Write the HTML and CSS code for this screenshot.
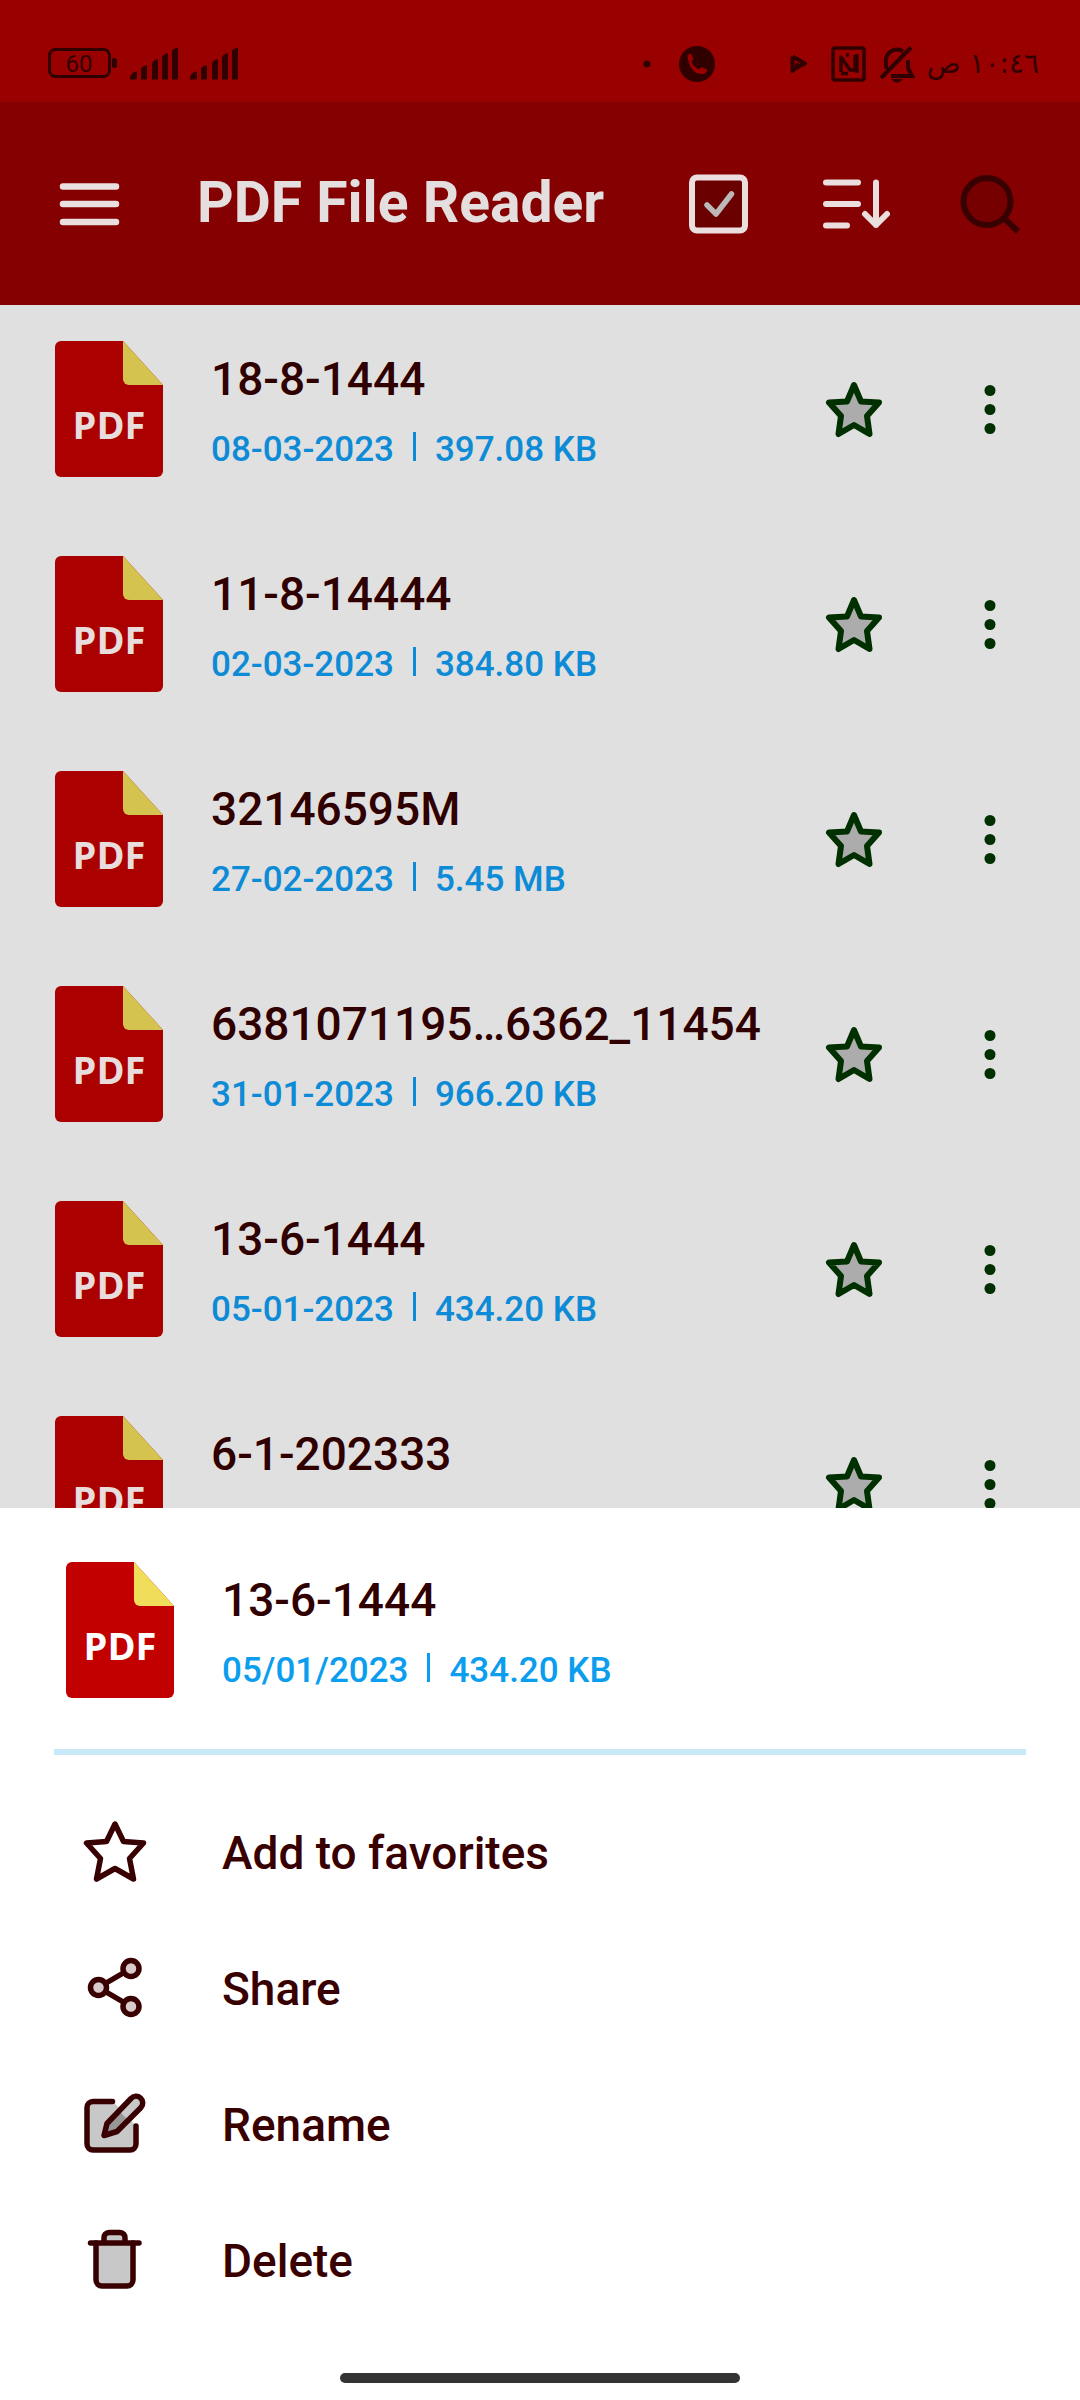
FILE: index.html
```html
<!DOCTYPE html>
<html lang="en">
<head>
<meta charset="utf-8">
<meta name="viewport" content="width=device-width, initial-scale=1">
<title>PDF File Reader</title>
<link rel="stylesheet" href="styles.css">
</head>
<body>
<svg class="sprite" aria-hidden="true">
  <symbol id="doc" viewBox="0 0 108 136">
    <path class="doc-page" d="M6 0H68L108 44V130a6 6 0 0 1-6 6H6a6 6 0 0 1-6-6V6a6 6 0 0 1 6-6Z"/>
    <path class="doc-fold" d="M68 0L108 44H74a6 6 0 0 1-6-6Z"/>
  </symbol>
  <symbol id="star" viewBox="0 0 72 72">
    <path d="M36 12L43 28.500L61 29.500L49 43L51.500 61L36 52L20.500 61L23 43L11 29.500L29 28.500Z" fill="#acacac" stroke="#003000" stroke-width="6" stroke-linejoin="round"/>
  </symbol>
  <symbol id="dots" viewBox="0 0 72 72">
    <g fill="#003000"><circle cx="36" cy="17.500" r="5.500"/><circle cx="36" cy="36.500" r="5.500"/><circle cx="36" cy="55.500" r="5.500"/></g>
  </symbol>
  <symbol id="signal" viewBox="0 0 48 32">
    <path d="M0 31.500a7 7 0 0 1 7-8v8ZM11 31.500V21q1-3 6-4v14.500ZM22 31.500V15q1-3 6-4v20.500ZM32 31.500V9q1-3 6-4v26.500ZM42 31.500V3q1-3 6-3v31.500Z" fill="#300000"/>
  </symbol>
</svg>

<div class="screen">
  <div class="status">
    <div class="status-left">
      <div class="battery">
        <svg viewBox="0 0 70 32" width="70" height="32" aria-hidden="true"><rect x="1.500" y="2.500" width="60" height="27" rx="6" fill="none" stroke="#300000" stroke-width="3"/><rect x="64" y="11" width="5" height="10" rx="2" fill="#300000"/></svg>
        <span class="battery-level">60</span>
      </div>
      <svg width="48" height="32" aria-hidden="true"><use href="#signal"/></svg>
      <svg width="48" height="32" aria-hidden="true"><use href="#signal"/></svg>
    </div>
    <div class="status-notes">
      <svg width="8" height="8" viewBox="0 0 8 8" aria-hidden="true"><circle cx="4" cy="4" r="3.500" fill="#300000"/></svg>
      <svg width="36" height="38" viewBox="0 0 36 38" aria-hidden="true"><circle cx="18" cy="19" r="18" fill="#300000"/><path d="M8.500 11q1-2.500 3.500-2.500l2.500 5.500-2 2.500q2 5.500 7.500 8l2.500-2.500 5.500 2.500q0 3.500-3.500 4.500Q11 30 8.500 11Z" fill="#990000"/></svg>
    </div>
    <div class="status-right">
      <svg width="29" height="20" viewBox="0 0 29 20" aria-hidden="true"><path d="M2.500 2.500L15 9.500L7 13.500V9M2.500 2.500V17L7 13.500" fill="none" stroke="#300000" stroke-width="4" stroke-linejoin="round"/></svg>
      <svg width="36" height="36" viewBox="0 0 36 36" aria-hidden="true"><g fill="none" stroke="#300000" stroke-width="3.500"><rect x="2" y="2" width="31" height="32" rx="2"/><path d="M10 26V11L19 24H24V9M10 27.500H17M15 9H18M26 8V27" stroke-linejoin="round"/></g></svg>
      <svg width="36" height="38" viewBox="0 0 36 38" aria-hidden="true"><g fill="none" stroke="#300000" stroke-width="4"><path d="M2 33L32 2.500M7 24V14A11 11 0 0 1 24 6.500M29 15V23L33 31H12"/></g><path d="M12 34H24Q18 41 12 34Z" fill="#300000"/></svg>
      <span class="clock" dir="rtl" lang="ar">١٠:٤٦ ص</span>
    </div>
  </div>

  <header class="appbar">
    <button class="icon-btn" aria-label="Menu"><svg width="72" height="72" viewBox="0 0 72 72"><path d="M9 18.500H62M9 36H62M9 54H62" stroke="#ebdede" stroke-width="6.500" stroke-linecap="round"/></svg></button>
    <h1 class="appbar-title">PDF File Reader</h1>
    <div class="actions">
      <button class="icon-btn" aria-label="Select"><svg width="72" height="72" viewBox="0 0 72 72" fill="none" stroke-linecap="round" stroke-linejoin="round"><rect x="10" y="9.500" width="53" height="53" rx="5" fill="#6b0000" stroke="#ebdede" stroke-width="6"/><path d="M25 37L34 46L49.500 26" stroke="#bdb8b8" stroke-width="5.500"/></svg></button>
      <button class="icon-btn" aria-label="Sort"><svg width="72" height="72" viewBox="0 0 72 72" fill="none" stroke="#ebdede" stroke-width="6" stroke-linecap="round" stroke-linejoin="round"><path d="M8 14.500H40M8 36H40M8 57.500H29M58 14.500V57M47 46L58 57L69 46"/></svg></button>
      <button class="icon-btn" aria-label="Search"><svg width="72" height="72" viewBox="0 0 72 72" fill="none" stroke="#380000" stroke-width="6"><circle cx="33" cy="33.500" r="23.500" fill="#760000"/><path d="M50 50L64 63.500"/></svg></button>
    </div>
  </header>

  <main class="files">
    <ul class="file-list">
      <li class="file">
        <div class="doc"><svg width="108" height="136" aria-hidden="true"><use href="#doc"/></svg><span class="doc-label">PDF</span></div>
        <div class="info"><div class="name">18-8-1444</div><div class="meta"><span>08-03-2023</span><i class="bar"></i><span>397.08 KB</span></div></div>
        <div class="actions"><button class="icon-btn" aria-label="Favorite"><svg width="72" height="72"><use href="#star"/></svg></button><button class="icon-btn" aria-label="More"><svg width="72" height="72"><use href="#dots"/></svg></button></div>
      </li>
      <li class="file">
        <div class="doc"><svg width="108" height="136" aria-hidden="true"><use href="#doc"/></svg><span class="doc-label">PDF</span></div>
        <div class="info"><div class="name">11-8-14444</div><div class="meta"><span>02-03-2023</span><i class="bar"></i><span>384.80 KB</span></div></div>
        <div class="actions"><button class="icon-btn" aria-label="Favorite"><svg width="72" height="72"><use href="#star"/></svg></button><button class="icon-btn" aria-label="More"><svg width="72" height="72"><use href="#dots"/></svg></button></div>
      </li>
      <li class="file">
        <div class="doc"><svg width="108" height="136" aria-hidden="true"><use href="#doc"/></svg><span class="doc-label">PDF</span></div>
        <div class="info"><div class="name">32146595M</div><div class="meta"><span>27-02-2023</span><i class="bar"></i><span>5.45 MB</span></div></div>
        <div class="actions"><button class="icon-btn" aria-label="Favorite"><svg width="72" height="72"><use href="#star"/></svg></button><button class="icon-btn" aria-label="More"><svg width="72" height="72"><use href="#dots"/></svg></button></div>
      </li>
      <li class="file">
        <div class="doc"><svg width="108" height="136" aria-hidden="true"><use href="#doc"/></svg><span class="doc-label">PDF</span></div>
        <div class="info"><div class="name">6381071195…6362_11454</div><div class="meta"><span>31-01-2023</span><i class="bar"></i><span>966.20 KB</span></div></div>
        <div class="actions"><button class="icon-btn" aria-label="Favorite"><svg width="72" height="72"><use href="#star"/></svg></button><button class="icon-btn" aria-label="More"><svg width="72" height="72"><use href="#dots"/></svg></button></div>
      </li>
      <li class="file">
        <div class="doc"><svg width="108" height="136" aria-hidden="true"><use href="#doc"/></svg><span class="doc-label">PDF</span></div>
        <div class="info"><div class="name">13-6-1444</div><div class="meta"><span>05-01-2023</span><i class="bar"></i><span>434.20 KB</span></div></div>
        <div class="actions"><button class="icon-btn" aria-label="Favorite"><svg width="72" height="72"><use href="#star"/></svg></button><button class="icon-btn" aria-label="More"><svg width="72" height="72"><use href="#dots"/></svg></button></div>
      </li>
      <li class="file">
        <div class="doc"><svg width="108" height="136" aria-hidden="true"><use href="#doc"/></svg><span class="doc-label">PDF</span></div>
        <div class="info"><div class="name">6-1-202333</div></div>
        <div class="actions"><button class="icon-btn" aria-label="Favorite"><svg width="72" height="72"><use href="#star"/></svg></button><button class="icon-btn" aria-label="More"><svg width="72" height="72"><use href="#dots"/></svg></button></div>
      </li>
    </ul>
  </main>

  <section class="sheet" aria-label="File actions">
    <div class="sheet-head">
      <div class="doc"><svg width="108" height="136" aria-hidden="true"><use href="#doc"/></svg><span class="doc-label">PDF</span></div>
      <div class="info"><div class="name">13-6-1444</div><div class="meta"><span>05/01/2023</span><i class="bar"></i><span>434.20 KB</span></div></div>
    </div>
    <hr class="divider">
    <div class="menu">
      <button class="menu-item"><svg width="72" height="72" viewBox="0 0 72 72"><path d="M36 9L44.500 26.500L64.500 28L50.500 43.500L54.500 64L36 53.500L17.500 64L21.500 43.500L7.500 28L27.500 26.500Z" fill="none" stroke="#380000" stroke-width="5.500" stroke-linejoin="round"/></svg><span class="menu-label">Add to favorites</span></button>
      <button class="menu-item"><svg width="72" height="72" viewBox="0 0 72 72"><g fill="#d9cbcb" stroke="#380000" stroke-width="5.500"><path d="M52 17.500L19.500 36.500L52 55.500" fill="none"/><circle cx="52" cy="17.500" r="8"/><circle cx="19.500" cy="36.500" r="8"/><circle cx="52" cy="55.500" r="8"/></g></svg><span class="menu-label">Share</span></button>
      <button class="menu-item"><svg width="72" height="72" viewBox="0 0 72 72" stroke-linejoin="round" stroke-linecap="round"><path d="M34 14.500H14a6 6 0 0 0-6 6V57a6 6 0 0 0 6 6H51a6 6 0 0 0 6-6V39Z" fill="#c8c8c8"/><path d="M33.500 14.500H14a6 6 0 0 0-6 6V57a6 6 0 0 0 6 6H51a6 6 0 0 0 6-6V39" fill="none" stroke="#380000" stroke-width="5.500"/><path d="M25 48.500L28 36.500L52 11.500A6.500 6.500 0 0 1 62 20.500L38 44.500Z" fill="#c8c8c8"/><path d="M25 48.500L28 36.500L40 24L49 33L38 44.500Z" fill="#979797"/><path d="M25 48.500L28 36.500L52 11.500A6.500 6.500 0 0 1 62 20.500L38 44.500Z" fill="none" stroke="#380000" stroke-width="5.500"/></svg><span class="menu-label">Rename</span></button>
      <button class="menu-item"><svg width="72" height="72" viewBox="0 0 72 72" stroke-linejoin="round" stroke-linecap="round"><g fill="#c8c8c8" stroke="#380000" stroke-width="5.500"><path d="M25 20V15a5 5 0 0 1 5-5.500H41a5 5 0 0 1 5 5.500V20"/><path d="M17 20V57a6 6 0 0 0 6 6H48a6 6 0 0 0 6-6V20"/><path d="M11.500 20H60"/></g></svg><span class="menu-label">Delete</span></button>
    </div>
    <div class="home-bar"></div>
  </section>
</div>
</body>
</html>
```
FILE: styles.css
```css
* { box-sizing: border-box; }

body {
  margin: 0;
  font-family: Roboto, "Noto Sans", sans-serif;
  color: #300000;
}

svg { display: block; }

.sprite { position: absolute; width: 0; height: 0; }

button {
  border: 0;
  padding: 0;
  background: none;
  font: inherit;
  color: inherit;
}

.screen {
  display: flex;
  flex-direction: column;
  height: 100vh;
  overflow: hidden;
}

/* Status bar */
.status {
  display: flex;
  flex: none;
  align-items: center;
  height: 102px;
  padding: 26px 41px 0 48px;
  background: #990000;
}

.status-left,
.status-notes,
.status-right {
  display: flex;
  align-items: center;
  gap: 12px;
}

.status-notes { gap: 28px; margin-left: auto; margin-right: 75px; }

.battery { display: grid; }
.battery > * { grid-area: 1 / 1; }

.battery-level {
  width: 62px;
  font-size: 24px;
  line-height: 34px;
  text-align: center;
}

.clock {
  font-family: "DejaVu Sans", sans-serif;
  font-size: 28px;
  line-height: 36px;
}

/* App bar */
.appbar {
  display: flex;
  flex: none;
  align-items: center;
  height: 203px;
  padding: 0 54px;
  background: #850000;
}

.appbar-title {
  flex: 1;
  margin: 0 0 0 71px;
  padding-bottom: 2px;
  font-size: 57px;
  font-weight: 700;
  line-height: 72px;
  color: #e4dede;
}

.actions { display: flex; gap: 64px; }

/* File list */
.files {
  flex: 1;
  min-height: 0;
  overflow: hidden;
  background: #e0e0e0;
}

.file-list {
  display: flex;
  flex-direction: column;
  gap: 79px;
  margin: 0;
  padding: 36px 54px 36px 55px;
  list-style: none;
}

.file,
.sheet-head {
  display: flex;
  gap: 48px;
}

.file .actions { align-self: center; }

.doc {
  --page: #ab0000;
  --fold: #d4c44f;
  display: grid;
  flex: none;
  color: #e8dcdc;
}
.doc > * { grid-area: 1 / 1; }

.doc-page { fill: var(--page); }
.doc-fold { fill: var(--fold); }

.doc-label {
  padding-top: 55px;
  font-family: "Open Sans", sans-serif;
  font-size: 38px;
  font-weight: 700;
  line-height: 56px;
  text-align: center;
}

.info {
  flex: 1;
  padding-top: 8px;
  font-weight: 500;
}

.name {
  font-size: 46px;
  line-height: 60px;
  white-space: nowrap;
}

.meta {
  display: flex;
  gap: 19px;
  padding-top: 17px;
  font-size: 35px;
  line-height: 48px;
  color: #0d8bd6;
}

.bar {
  width: 3px;
  height: 29px;
  margin-top: 6px;
  background: currentColor;
}

/* Bottom sheet */
.sheet {
  flex: none;
  background: #fff;
}

.sheet-head { padding: 54px 66px 51px; }

.sheet .doc {
  --page: #c30000;
  --fold: #f0dd5a;
  color: #fff;
}

.sheet .meta { color: #0b9dee; }

.divider {
  height: 6px;
  margin: 0 54px;
  border: 0;
  background: #c9e9f9;
}

.menu {
  display: flex;
  flex-direction: column;
  padding-top: 28px;
}

.menu-item {
  display: flex;
  align-items: center;
  gap: 71px;
  height: 136px;
  padding: 0 79px;
  font-size: 46px;
  font-weight: 500;
  line-height: 60px;
  color: #380000;
}

.menu-label { padding-top: 4px; }

.home-bar {
  width: 400px;
  max-width: 60%;
  height: 10px;
  margin: 46px auto 17px;
  border-radius: 5px;
  background: #333;
}
```
